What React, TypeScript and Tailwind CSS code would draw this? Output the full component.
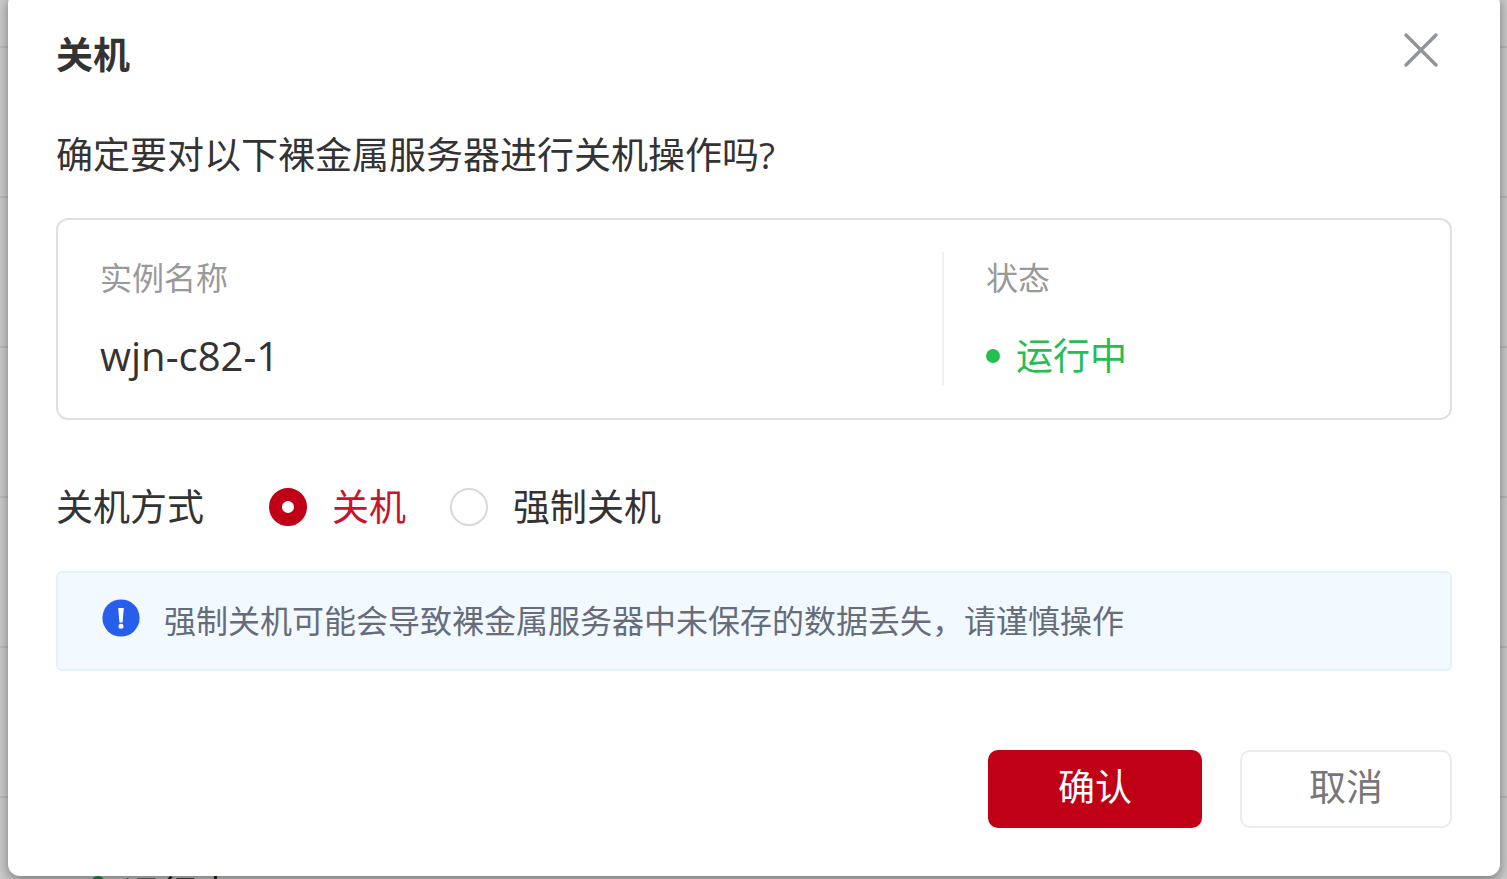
import { useState } from "react";

const modes = [
  { value: "normal", label: "关机" },
  { value: "force", label: "强制关机" },
];

function Backdrop() {
  return (
    <div
      aria-hidden="true"
      className="col-start-1 row-start-1 flex h-screen flex-col overflow-hidden bg-[#cacaca]"
    >
      <div className="h-12 shrink-0 border-b-2 border-[#bababa]" />
      {[1, 2, 3, 4, 5].map((row) => (
        <div key={row} className="h-[150px] shrink-0 border-b-2 border-[#bababa]" />
      ))}
      <div className="flex shrink-0 items-start gap-[18px] px-[91px] pt-[68px] text-[37px] leading-[56px] text-[#222]">
        <span className="mt-[10px] size-[14px] rounded-full bg-[#1d8a3f]" />
        <span>运行中</span>
      </div>
    </div>
  );
}

function CloseIcon() {
  return (
    <svg viewBox="0 0 36 36" className="size-9" fill="none" stroke="#909399" strokeWidth="3.4" strokeLinecap="round">
      <path d="M3 3L33 33M33 3L3 33" />
    </svg>
  );
}

function InfoIcon() {
  return (
    <svg viewBox="0 0 38 38" className="mt-[6px] size-[38px] shrink-0">
      <circle cx="19" cy="19" r="18.6" fill="#275eeb" />
      <path d="M16.2 9h5.6l-1.2 14.6h-3.2z" fill="#fff" />
      <circle cx="19" cy="27.2" r="2.5" fill="#fff" />
    </svg>
  );
}

export default function App() {
  const [mode, setMode] = useState("normal");

  return (
    <div className="grid h-screen overflow-hidden font-['Open_Sans','Noto_Sans_CJK_SC',sans-serif] text-[37px] leading-[56px] text-[#333]">
      <Backdrop />
      <section
        role="dialog"
        aria-modal="true"
        aria-labelledby="dialog-title"
        className="relative col-start-1 row-start-1 -mt-2 mr-[7px] mb-[3px] ml-2 flex flex-col rounded-xl bg-white px-12 pt-[35px] pb-12 shadow-[0_4px_12px_rgba(0,0,0,0.4)]"
      >
        <header className="flex items-center justify-between pr-[13px]">
          <h2 id="dialog-title" className="font-bold">
            关机
          </h2>
          <button type="button" aria-label="关闭" className="-mt-[10px]">
            <CloseIcon />
          </button>
        </header>

        <p className="mt-11">确定要对以下裸金属服务器进行关机操作吗?</p>

        <dl className="mt-[35px] flex rounded-xl border-2 border-[#e0e0e0] px-[42px] py-8">
          <div className="w-[844px] border-r-2 border-[#f1f1f1] pb-[2px]">
            <dt className="text-[32px] leading-[52px] text-[#999]">实例名称</dt>
            <dd className="mt-6 text-[40px] leading-[56px]">wjn-c82-1</dd>
          </div>
          <div className="flex-1 pb-[2px] pl-[42px]">
            <dt className="text-[32px] leading-[52px] text-[#999]">状态</dt>
            <dd className="mt-6 flex items-center gap-4 text-[#27bd52]">
              <span className="size-[14px] rounded-full bg-[#27bd52]" />
              运行中
            </dd>
          </div>
        </dl>

        <fieldset className="mt-[59px] flex items-center gap-11">
          <legend className="float-left mr-[21px]">关机方式</legend>
          {modes.map(({ value, label }) => (
            <label key={value} className="flex items-center gap-[25px] has-checked:text-[#c9142d]">
              <input
                type="radio"
                name="mode"
                value={value}
                checked={mode === value}
                onChange={() => setMode(value)}
                className="size-[38px] appearance-none rounded-full border-2 border-[#d9d9d9] bg-white checked:border-[13px] checked:border-[#c00017]"
              />
              {label}
            </label>
          ))}
        </fieldset>

        <div className="mt-9 flex items-start gap-6 rounded-md border-2 border-[#e2f1fe] bg-[#f2f9ff] px-11 py-5 text-[32px] leading-[56px] text-[#666c7a]">
          <InfoIcon />
          <p>强制关机可能会导致裸金属服务器中未保存的数据丢失，请谨慎操作</p>
        </div>

        <footer className="mt-auto flex justify-end gap-[38px]">
          <button type="button" className="h-[78px] w-[214px] rounded-[10px] bg-[#c00017] pb-1 text-white">
            确认
          </button>
          <button
            type="button"
            className="h-[78px] w-[212px] rounded-[10px] border-2 border-[#ececec] bg-white pb-1 text-[#777]"
          >
            取消
          </button>
        </footer>
      </section>
    </div>
  );
}
